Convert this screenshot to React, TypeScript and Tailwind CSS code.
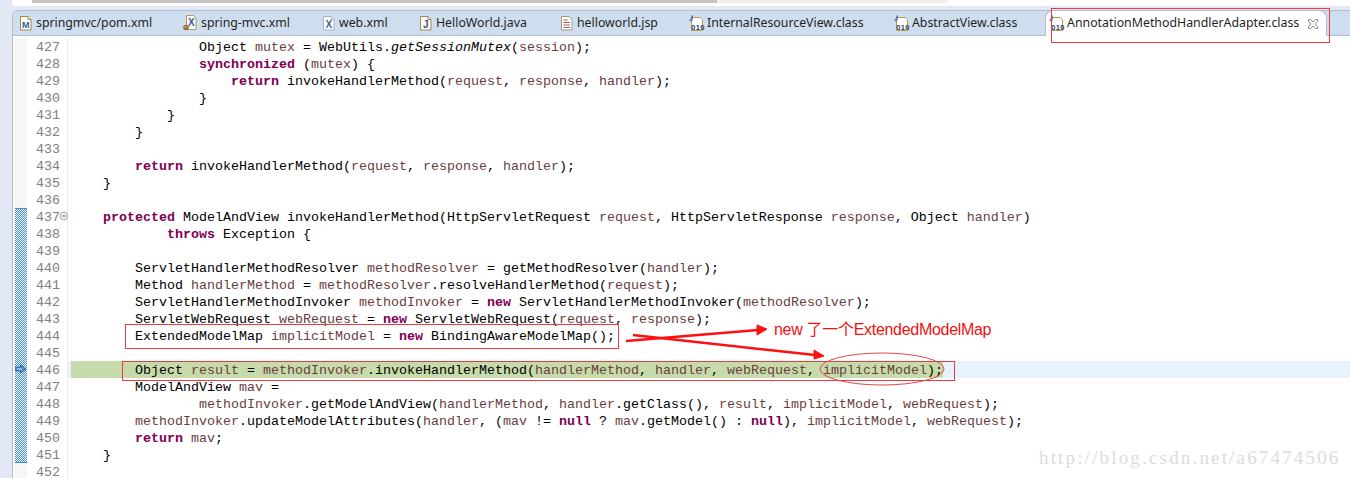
import React from "react";

type Tok = [string, string?];
const k = "k", v = "v", i = "i";

const T = (s: string): Tok => [s];
const lines: { n: number; pad: number; toks: Tok[] }[] = [
  { n: 427, pad: 16, toks: [T("Object "), ["mutex", v], T(" = WebUtils."), ["getSessionMutex", i], T("("), ["session", v], T(");")] },
  { n: 428, pad: 16, toks: [["synchronized", k], T(" ("), ["mutex", v], T(") {")] },
  { n: 429, pad: 20, toks: [["return", k], T(" invokeHandlerMethod("), ["request", v], T(", "), ["response", v], T(", "), ["handler", v], T(");")] },
  { n: 430, pad: 16, toks: [T("}")] },
  { n: 431, pad: 12, toks: [T("}")] },
  { n: 432, pad: 8, toks: [T("}")] },
  { n: 433, pad: 0, toks: [] },
  { n: 434, pad: 8, toks: [["return", k], T(" invokeHandlerMethod("), ["request", v], T(", "), ["response", v], T(", "), ["handler", v], T(");")] },
  { n: 435, pad: 4, toks: [T("}")] },
  { n: 436, pad: 0, toks: [] },
  { n: 437, pad: 4, toks: [["protected", k], T(" ModelAndView invokeHandlerMethod(HttpServletRequest "), ["request", v], T(", HttpServletResponse "), ["response", v], T(", Object "), ["handler", v], T(")")] },
  { n: 438, pad: 12, toks: [["throws", k], T(" Exception {")] },
  { n: 439, pad: 0, toks: [] },
  { n: 440, pad: 8, toks: [T("ServletHandlerMethodResolver "), ["methodResolver", v], T(" = getMethodResolver("), ["handler", v], T(");")] },
  { n: 441, pad: 8, toks: [T("Method "), ["handlerMethod", v], T(" = "), ["methodResolver", v], T(".resolveHandlerMethod("), ["request", v], T(");")] },
  { n: 442, pad: 8, toks: [T("ServletHandlerMethodInvoker "), ["methodInvoker", v], T(" = "), ["new", k], T(" ServletHandlerMethodInvoker("), ["methodResolver", v], T(");")] },
  { n: 443, pad: 8, toks: [T("ServletWebRequest "), ["webRequest", v], T(" = "), ["new", k], T(" ServletWebRequest("), ["request", v], T(", "), ["response", v], T(");")] },
  { n: 444, pad: 8, toks: [T("ExtendedModelMap "), ["implicitModel", v], T(" = "), ["new", k], T(" BindingAwareModelMap();")] },
  { n: 445, pad: 0, toks: [] },
  { n: 446, pad: 8, toks: [T("Object "), ["result", v], T(" = "), ["methodInvoker", v], T(".invokeHandlerMethod("), ["handlerMethod", v], T(", "), ["handler", v], T(", "), ["webRequest", v], T(", "), ["implicitModel", v], T(");")] },
  { n: 447, pad: 8, toks: [T("ModelAndView "), ["mav", v], T(" =")] },
  { n: 448, pad: 16, toks: [["methodInvoker", v], T(".getModelAndView("), ["handlerMethod", v], T(", "), ["handler", v], T(".getClass(), "), ["result", v], T(", "), ["implicitModel", v], T(", "), ["webRequest", v], T(");")] },
  { n: 449, pad: 8, toks: [["methodInvoker", v], T(".updateModelAttributes("), ["handler", v], T(", ("), ["mav", v], T(" != "), ["null", k], T(" ? "), ["mav", v], T(".getModel() : "), ["null", k], T("), "), ["implicitModel", v], T(", "), ["webRequest", v], T(");")] },
  { n: 450, pad: 8, toks: [["return", k], T(" "), ["mav", v], T(";")] },
  { n: 451, pad: 4, toks: [T("}")] },
  { n: 452, pad: 0, toks: [] },
];

function DocIcon({ kind }: { kind: string }) {
  const color = kind === "M" ? "#1f5fa8" : kind === "J" ? "#3a4f7a" : "#4a5f96";
  const edge = kind === "M" ? "#a8873a" : kind === "J" ? "#a08850" : "#a9b0bf";
  return (
    <svg width="16" height="16" viewBox="0 0 16 16" className="shrink-0">
      <path d="M0.500 1.500h7.500l3 3v10.500h-10.500z" fill="#fff" stroke={edge} />
      <path d="M8 1.500v3h3" fill="#f2f2f2" stroke={edge} />
      <text x="5.800" y="13" textAnchor="middle" fontSize={kind === "M" ? 9 : 10} fontWeight="700" fontFamily="'Liberation Sans', sans-serif" fill={color}>{kind}</text>
    </svg>
  );
}

function SpringXmlIcon() {
  return (
    <svg width="18" height="16" viewBox="0 0 18 16" className="shrink-0">
      <path d="M3.500 0.500h7l2.500 2.500v11.500h-9.500z" fill="#fff" stroke="#b09a60" />
      <text x="8.300" y="11" textAnchor="middle" fontSize="10" fontWeight="700" fontFamily="'Liberation Sans', sans-serif" fill="#3f5590">X</text>
      <circle cx="3" cy="12.500" r="2.800" fill="#a5683a" />
      <circle cx="2.400" cy="11.800" r="0.900" fill="#e3c29c" />
    </svg>
  );
}

function JspIcon() {
  return (
    <svg width="16" height="16" viewBox="0 0 16 16" className="shrink-0">
      <path d="M0.500 1.500h7.500l3 3v10.500h-10.500z" fill="#fff" stroke="#a89a70" />
      <path d="M2.500 5h4M2.500 7.500h6.500M2.500 10h6.500M2.500 12.500h6.500" stroke="#c05050" />
      <path d="M6 7.500h3M5 12.500h4" stroke="#6a80b0" />
    </svg>
  );
}

function ClassIcon() {
  return (
    <svg width="18" height="17" viewBox="0 0 18 17" className="shrink-0">
      <path d="M2.500 2.500h7.500c2 0 3.500 1.500 3.500 3.500v9.500h-11z" fill="#fff" stroke="#b8964a" />
      <path d="M3 0.500v4" stroke="#3e6aa8" strokeWidth="1.500" />
      <circle cx="2" cy="5" r="1.500" fill="#5a86c0" />
      <text x="9" y="14.500" textAnchor="middle" fontSize="7.500" fontWeight="700" fontFamily="'Liberation Sans', sans-serif" letterSpacing="0.300" fill="#2f3f5f">010</text>
    </svg>
  );
}

function Tab({ icon, label, w }: { icon: React.ReactNode; label: string; w: string }) {
  return (
    <div className={`flex items-center shrink-0 ${w}`}>
      {icon}
      <span className="text-[12.300px] text-[#1f1f1f] whitespace-nowrap">{label}</span>
    </div>
  );
}

function Row({ line }: { line: (typeof lines)[number] }) {
  const hatched = line.n >= 437 && line.n <= 451;
  const current = line.n === 446;
  return (
    <div className={`flex h-[17px] ${current ? "bg-[#e8f2fe]" : ""}`}>
      <div className="w-[2px] bg-white" />
      <div
        className={`relative w-[12px] h-[17px] ${
          hatched
            ? "bg-[repeating-conic-gradient(#3f8fe0_0_25%,#ffffff_0_50%)] bg-[length:2px_2px] bg-fixed"
            : "bg-[#f6f6f6]"
        }`}
      >
        {line.n === 437 && <div className="absolute left-0 right-0 top-0 h-[1px] bg-[#3f8fe0]" />}
        {line.n === 451 && <div className="absolute left-0 right-0 bottom-0 h-[1px] bg-[#3f8fe0]" />}
        {current && (
          <svg width="12" height="12" viewBox="0 0 12 12" className="absolute left-0 top-[3px]">
            <path d="M0.500 3h5V0.800l5.500 4.200-5.500 4.200V7h-5z" fill="#4a8ccc" stroke="#25578f" strokeWidth="0.700" />
            <path d="M2 5h5" stroke="#ffffff" strokeWidth="0.800" />
          </svg>
        )}
      </div>
      <div className="relative w-[41px] bg-white border-r border-[#ededed] text-[#808080] pl-[9px]">
        {line.n}
        {line.n === 437 && (
          <svg width="10" height="10" viewBox="0 0 10 10" className="absolute left-[32px] top-[3px]">
            <circle cx="5" cy="5" r="4" fill="#e8eef4" stroke="#9db4c6" />
            <path d="M3 5h4" stroke="#5f7f95" />
          </svg>
        )}
      </div>
      <div className="w-[3px] shrink-0" />
      <div className="flex-1 whitespace-pre">
        <div className={`w-fit h-[17px] ${current ? "bg-[#c7dbaa]" : ""}`}>
          {" ".repeat(line.pad)}
          {line.toks.map((t, idx) => (
            <span
              key={idx}
              className={
                t[1] === "k"
                  ? "font-bold text-[#7f0055]"
                  : t[1] === "v"
                    ? "text-[#6a3e3e]"
                    : t[1] === "i"
                      ? "italic text-black"
                      : "text-black"
              }
            >
              {t[0]}
            </span>
          ))}
        </div>
      </div>
    </div>
  );
}

export default function App() {
  return (
    <div className="relative w-[1350px] h-[478px] overflow-hidden bg-[#e3e8f5] font-['Noto_Sans',sans-serif]">
      {/* top strip */}
      <div className="h-[10px] flex">
        <div className="w-[12px]" />
        <div className="flex-1 h-[6px] bg-white rounded-bl-[4px] flex items-start">
          <div className="w-[20px]" />
          <div className="w-[685px] h-[3px] bg-[#c4c4c4]" />
          <div className="w-[231px] h-[3px] bg-[#f0f0f0]" />
        </div>
      </div>
      <div className="ml-[12px] h-[468px] bg-white border-l border-[#b5bdd2] flex flex-col rounded-tl-[5px]">
        {/* tab bar */}
        <div className="h-[26px] shrink-0 flex items-center bg-[#cfdeee] border-t border-b border-[#b5bdd2] pl-[7px] rounded-tl-[5px]">
          <Tab w="w-[163px]" icon={<DocIcon kind="M" />} label="springmvc/pom.xml" />
          <Tab w="w-[140px]" icon={<SpringXmlIcon />} label="spring-mvc.xml" />
          <Tab w="w-[97px]" icon={<DocIcon kind="X" />} label="web.xml" />
          <Tab w="w-[141px]" icon={<DocIcon kind="J" />} label="HelloWorld.java" />
          <Tab w="w-[128px]" icon={<JspIcon />} label="helloworld.jsp" />
          <Tab w="w-[205px]" icon={<ClassIcon />} label="InternalResourceView.class" />
          <Tab w="w-[151px]" icon={<ClassIcon />} label="AbstractView.class" />
          <div className="self-stretch mt-[-1px] mb-[-1px] w-[282px] shrink-0 bg-white border-t border-x border-[#b5bdd2] rounded-t-[8px] flex items-center pl-[3px]">
            <ClassIcon />
            <span className="text-[12.350px] text-[#1f1f1f] whitespace-nowrap">AnnotationMethodHandlerAdapter.class</span>
            <svg width="12" height="12" viewBox="0 0 12 12" className="ml-[8px] shrink-0">
              <path d="M1.500 1.500h2l2.500 2.500 2.500-2.500h2v2l-2.500 2.500 2.500 2.500v2h-2l-2.500-2.500-2.500 2.500h-2v-2l2.500-2.500-2.500-2.500z" fill="#fff" stroke="#8a8a8a" />
            </svg>
          </div>
        </div>
        {/* editor */}
        <div className="pt-[2px] shrink-0 font-['Liberation_Mono',monospace] text-[13.333px] leading-[19px]">
          {lines.map((l) => (
            <Row key={l.n} line={l} />
          ))}
        </div>
      </div>

      {/* annotation overlays */}
      <div className="absolute left-[1051px] top-[8px] w-[279px] h-[35px] border border-[#f03a3a]" />
      <div className="absolute left-[125px] top-[324px] w-[494px] h-[25px] border border-[#f03a3a]" />
      <div className="absolute left-[122px] top-[361px] w-[833px] h-[20px] border border-[#f03a3a]" />
      <svg className="absolute left-0 top-0" width="1350" height="478" viewBox="0 0 1350 478">
        <ellipse cx="882" cy="369" rx="62" ry="16" fill="none" stroke="#e04848" />
        <path d="M626 341L758 330" stroke="#ff1010" strokeWidth="2.500" />
        <path d="M757 325L767 329L757 335z" fill="#ff1010" stroke="#ff1010" />
        <path d="M633 335L815 355" stroke="#ff1010" strokeWidth="2.500" />
        <path d="M814 350L824 356L814 359z" fill="#ff1010" stroke="#ff1010" />
      </svg>
      <div className="absolute left-[774px] top-[319px] text-[16px] leading-[22px] tracking-[-0.300px] text-[#f01010] whitespace-nowrap font-['Liberation_Sans','Noto_Sans_CJK_SC',sans-serif]">
        new 了一个ExtendedModelMap
      </div>
      <div className="absolute left-[1039px] top-[447px] text-[19px] leading-[22px] tracking-[2.170px] text-[#dcdcda] whitespace-nowrap font-['Liberation_Serif',serif]">
        http://blog.csdn.net/a67474506
      </div>
    </div>
  );
}
